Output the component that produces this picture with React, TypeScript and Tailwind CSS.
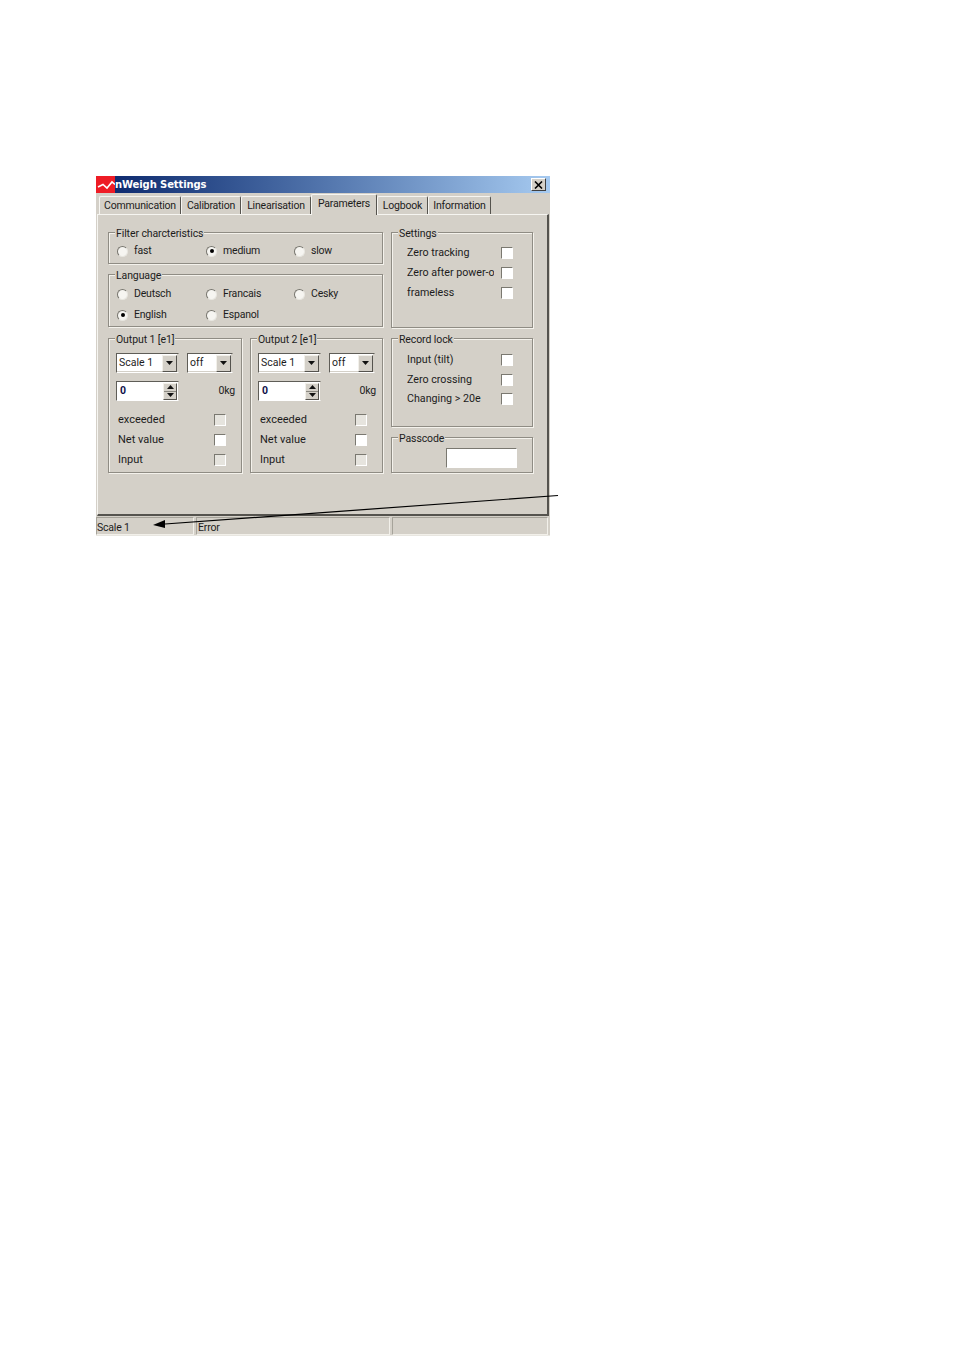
const sunken = "border border-t-[#7a7870] border-l-[#7a7870] border-r-white border-b-white";
const cell = "border border-t-[#a6a39a] border-l-[#a6a39a] border-r-[#f2f0ea] border-b-[#f2f0ea]";

function Group({ title, className, children }: { title: string; className: string; children?: React.ReactNode }) {
  return (
    <div className={`relative border border-[#8f8c84] shadow-[inset_1px_1px_0_#f4f2ec,1px_1px_0_#f4f2ec] ${className}`}>
      <span className="absolute -top-[5px] left-[6px] bg-[#d4d0c8] px-px leading-[12px] tracking-[-0.1px]">{title}</span>
      {children}
    </div>
  );
}

function Radio({ label, on, className }: { label: string; on?: boolean; className?: string }) {
  return (
    <div className={`flex items-center gap-[6px] h-[14px] ${className ?? ""}`}>
      <span className="flex items-center justify-center w-[11px] h-[11px] rounded-full bg-[#f6f5f1] border border-t-[#77756e] border-l-[#77756e] border-r-[#e8e6e0] border-b-[#e8e6e0]">
        {on && <span className="w-[4px] h-[4px] rounded-full bg-black" />}
      </span>
      <span>{label}</span>
    </div>
  );
}

function Check({ dim }: { dim?: boolean }) {
  return <span className={`block w-[12px] h-[12px] shrink-0 ${sunken} ${dim ? "bg-[#e6e4de]" : "bg-white"}`} />;
}

function Arrow({ up }: { up?: boolean }) {
  return (
    <svg width="7" height="4" viewBox="0 0 7 4" className="block">
      <path d={up ? "M3.5 0 L7 4 L0 4 Z" : "M0 0 L7 0 L3.5 4 Z"} fill="#111" />
    </svg>
  );
}

function Combo({ text, className }: { text: string; className: string }) {
  return (
    <div className={`flex h-[20px] items-center justify-between bg-white pl-[2px] pr-px border border-t-[#5f5d57] border-l-[#5f5d57] border-r-[#d4d0c8] border-b-white shadow-[inset_-1px_-1px_0_#d4d0c8] ${className}`}>
      <span className="leading-none tracking-normal">{text}</span>
      <span className="flex h-[17px] w-[15px] items-center justify-center bg-[#d4d0c8] border border-t-[#f2f0ea] border-l-[#f2f0ea] border-r-[#55534e] border-b-[#55534e]">
        <Arrow />
      </span>
    </div>
  );
}

function Output({ title, width }: { title: string; width: string }) {
  return (
    <Group title={title} className={`${width} h-[135px] pl-[7px] pr-[6px] pt-[14px]`}>
      <div className="flex gap-[8px]">
        <Combo text="Scale 1" className="w-[63px]" />
        <Combo text="off" className="w-[46px]" />
      </div>
      <div className="mt-[8px] flex items-center justify-between">
        <div className="flex h-[20px] w-[63px] items-center justify-between bg-white pl-[3px] pr-px border border-t-[#5f5d57] border-l-[#5f5d57] border-r-[#d4d0c8] border-b-white">
          <span className="font-bold text-[#10104a] leading-none">0</span>
          <span className="flex w-[14px] h-[17px] flex-col bg-[#d4d0c8] border border-t-[#f2f0ea] border-l-[#f2f0ea] border-r-[#55534e] border-b-[#55534e]">
            <span className="flex flex-1 items-center justify-center border-b border-[#8a8880]"><Arrow up /></span>
            <span className="flex flex-1 items-center justify-center"><Arrow /></span>
          </span>
        </div>
        <span>0kg</span>
      </div>
      <div className="mt-[12px] flex flex-col gap-[6px] pl-[2px] pr-[9px] text-[11px] tracking-normal">
        {["exceeded", "Net value", "Input"].map((l, i) => (
          <div key={l} className="flex h-[14px] items-center justify-between">
            <span>{l}</span>
            <Check dim={i !== 1} />
          </div>
        ))}
      </div>
    </Group>
  );
}

function CheckList({ items, className }: { items: string[]; className: string }) {
  return (
    <div className={`flex flex-col pl-[15px] pr-[19px] text-[10.7px] tracking-normal ${className}`}>
      {items.map((l) => (
        <div key={l} className="flex h-[14px] items-center justify-between">
          <span className="w-[87px] overflow-hidden whitespace-nowrap">{l}</span>
          <Check />
        </div>
      ))}
    </div>
  );
}

function Tab({ label, className, active }: { label: string; className: string; active?: boolean }) {
  return (
    <div
      className={`flex items-center justify-center border-l border-t border-l-[#f6f5f1] border-t-[#f6f5f1] border-r border-r-[#55534e] rounded-t-[2px] ${
        active ? "h-[21px] bg-[#d4d0c8] pb-[2px] -mb-px relative z-10" : "h-[18px] pt-[1px] bg-[#d4d0c8]"
      } ${className}`}
    >
      {label}
    </div>
  );
}

export default function App() {
  return (
    <div className="relative min-h-[1350px] bg-white pl-[96px] pt-[176px] font-['Roboto',sans-serif] text-[10.5px] leading-[14px] tracking-[-0.2px] text-[#1c1c1c]">
      <div className="flex h-[360px] w-[454px] flex-col bg-[#d4d0c8]">
        <div className="flex h-[17px] shrink-0 items-center justify-between bg-gradient-to-r from-[#0a246a] to-[#a6caf0] pr-[4px]">
          <div className="flex items-center">
            <svg width="19" height="17" viewBox="0 0 19 17" className="block">
              <rect width="19" height="17" fill="#ee1c25" />
              <path d="M2 11 L7 8.5 L11 12 L16 6 L19 8.5" fill="none" stroke="#fff" strokeWidth="1.6" />
            </svg>
            <span className="font-['DejaVu_Sans',sans-serif] text-[10px] tracking-[-0.1px] font-bold text-white">nWeigh Settings</span>
          </div>
          <span className="flex h-[13px] w-[15px] items-center justify-center bg-[#d4d0c8] border border-t-white border-l-white border-r-[#404040] border-b-[#404040]">
            <svg width="9" height="8" viewBox="0 0 9 8" className="block">
              <path d="M1 0.5 L8 7.5 M8 0.5 L1 7.5" stroke="#000" strokeWidth="1.6" />
            </svg>
          </span>
        </div>

        <div className="flex h-[21px] shrink-0 items-end pl-[3px]">
          <Tab label="Communication" className="w-[82px]" />
          <Tab label="Calibration" className="w-[60px]" />
          <Tab label="Linearisation" className="w-[70px]" />
          <Tab label="Parameters" className="w-[66px]" active />
          <Tab label="Logbook" className="w-[51px]" />
          <Tab label="Information" className="w-[63px]" />
        </div>

        <div className="flex h-[302px] w-[452px] shrink-0 ml-px gap-[8px] border-t border-l border-t-[#f6f5f1] border-l-[#f6f5f1] border-r-2 border-b-2 border-r-[#55534e] border-b-[#55534e] pl-[10px] pt-[17px]">
          <div className="flex w-[275px] flex-col gap-[10px]">
            <Group title="Filter charcteristics" className="h-[32px]">
              <div className="grid grid-cols-[89px_88px_89px] pl-[8px] pt-[11px]">
                <Radio label="fast" />
                <Radio label="medium" on />
                <Radio label="slow" />
              </div>
            </Group>
            <Group title="Language" className="h-[53px]">
              <div className="grid grid-cols-[89px_88px_89px] gap-y-[7px] pl-[8px] pt-[12px]">
                <Radio label="Deutsch" />
                <Radio label="Francais" />
                <Radio label="Cesky" />
                <Radio label="English" on />
                <Radio label="Espanol" />
              </div>
            </Group>
            <div className="mt-px flex justify-between">
              <Output title="Output 1 [e1]" width="w-[134px]" />
              <Output title="Output 2 [e1]" width="w-[133px]" />
            </div>
          </div>
          <div className="flex w-[142px] flex-col gap-[10px]">
            <Group title="Settings" className="h-[96px]">
              <CheckList items={["Zero tracking", "Zero after power-on", "frameless"]} className="gap-[6px] pt-[13px]" />
            </Group>
            <Group title="Record lock" className="h-[89px]">
              <CheckList items={["Input (tilt)", "Zero crossing", "Changing > 20e"]} className="gap-[5.5px] pt-[14px]" />
            </Group>
            <Group title="Passcode" className="flex h-[36px] items-start justify-end pr-[15px] pt-[10px]">
              <span className={`block h-[20px] w-[71px] bg-white ${sunken}`} />
            </Group>
          </div>
        </div>

        <div className="flex h-[20px] shrink-0 gap-[2px] border-b border-[#e8e6e0] pt-px">
          <div className={`w-[98px] pt-[3px] ${cell}`}>Scale 1</div>
          <div className={`w-[194px] pl-px pt-[3px] ${cell}`}>Error</div>
          <div className={`w-[156px] ${cell}`} />
        </div>
      </div>

      <svg width="954" height="1350" viewBox="0 0 954 1350" className="pointer-events-none absolute left-0 top-0">
        <path d="M558 495.5 L165 524" stroke="#000" strokeWidth="1.2" fill="none" />
        <path d="M153 525 L165 520 L165 528 Z" fill="#000" />
      </svg>
    </div>
  );
}
